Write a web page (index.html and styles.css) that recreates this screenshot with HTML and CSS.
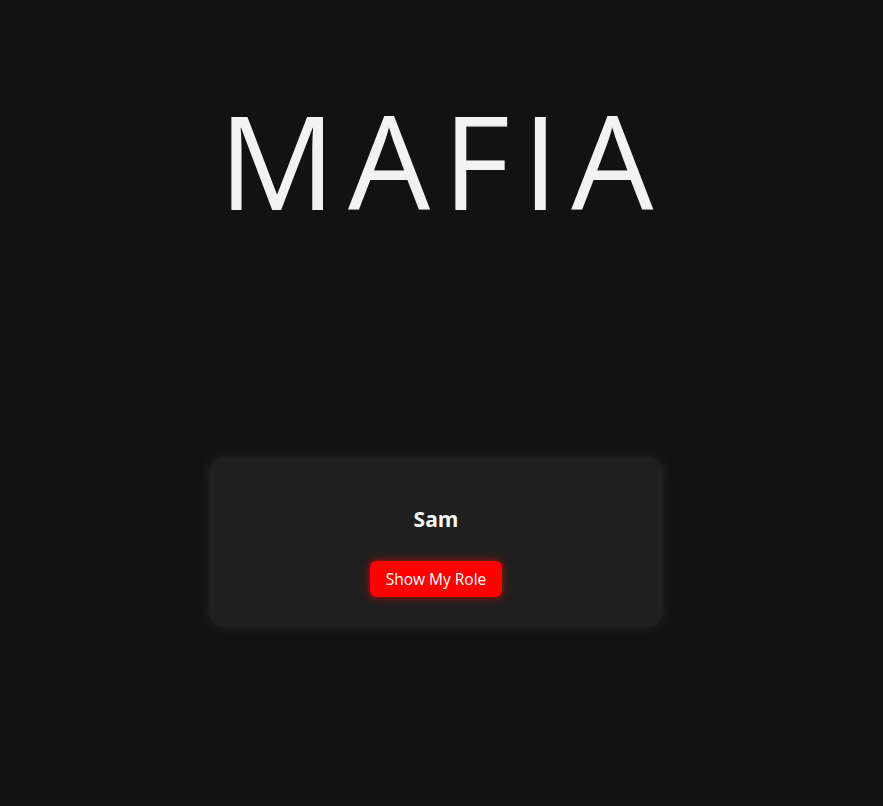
FILE: index.html
```html
<!DOCTYPE html>
<html lang="en">
<head>
<meta charset="utf-8">
<title>Mafia</title>
<link rel="stylesheet" href="styles.css">
</head>
<body>
<main class="page">
  <h1 class="title">MAFIA</h1>
  <section class="card">
    <h2 class="player-name">Sam</h2>
    <button class="role-btn" type="button">Show My Role</button>
  </section>
</main>
</body>
</html>
```

FILE: styles.css
```css
html, body {
  margin: 0;
  padding: 0;
  background: #121212;
  height: 100%;
}
body {
  font-family: "Open Sans", "Noto Sans", sans-serif;
  color: #f0f0f0;
}
.page {
  display: flex;
  flex-direction: column;
  align-items: center;
  padding-right: 11px;
}
.title {
  margin: 79px 0 0 0;
  font-weight: 400;
  font-size: 130px;
  line-height: 162px;
  letter-spacing: 12.5px;
  padding-left: 12.5px;
  color: #f2f2f2;
}
.card {
  margin-top: 219px;
  width: 448px;
  height: 165px;
  box-sizing: border-box;
  background: #1f1f1f;
  border-radius: 10px;
  box-shadow: 0 0 0 1px #232323, 0 0 12px rgba(70, 70, 70, 0.6);
  display: flex;
  flex-direction: column;
  align-items: center;
  padding-top: 45px;
}
.player-name {
  margin: 0;
  font-size: 21px;
  font-weight: 700;
  line-height: 28px;
  color: #f5f5f5;
}
.role-btn {
  margin-top: 28px;
  background: #ff0000;
  color: #ffffff;
  border: none;
  border-radius: 6px;
  height: 36px;
  padding: 0 16px;
  font-family: "Open Sans", "Noto Sans", sans-serif;
  font-size: 15.5px;
  box-shadow: 0 0 10px rgba(255, 0, 0, 0.7);
  cursor: pointer;
}
```
